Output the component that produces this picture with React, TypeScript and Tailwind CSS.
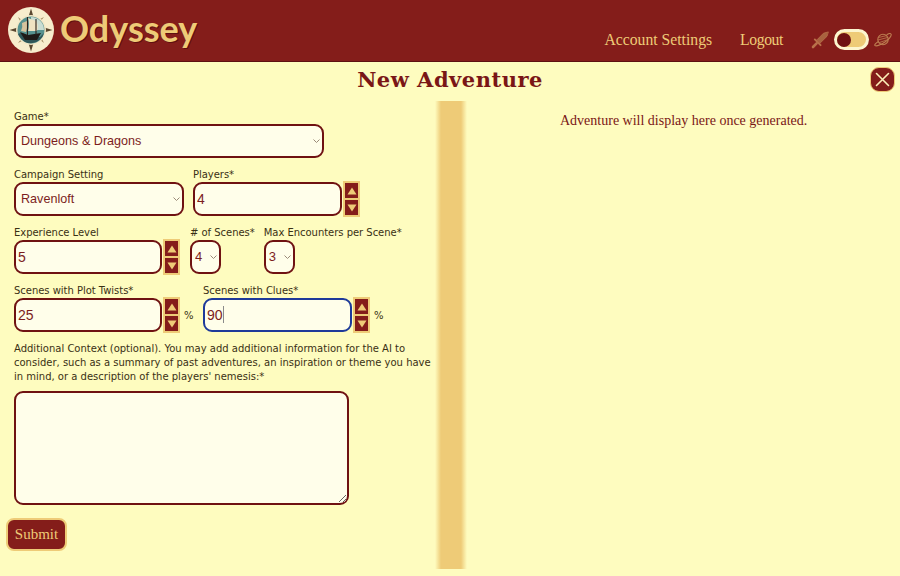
import React from "react";

const Label = ({ children }: { children: React.ReactNode }) => (
  <label className="block text-[10px] leading-[14px] tracking-[-0.03px] text-[#3a3014] font-['DejaVu_Sans',sans-serif] whitespace-nowrap">
    {children}
  </label>
);

const fieldCls =
  "block h-[34px] rounded-[9px] border-2 bg-[#fffeea] text-[#7c1d1d] font-['Liberation_Sans',sans-serif] outline-none";

const Spin = () => (
  <div className="flex flex-col ml-[1px] -my-[1px] w-[17px] h-[36px] bg-[#eecb77] p-[2px] gap-[2px]">
    {[0, 1].map((i) => (
      <button key={i} type="button" className="flex-1 bg-[#841c1a] flex items-center justify-center">
        <svg width="10" height="8" viewBox="0 0 10 8">
          <path d={i === 0 ? "M5 0.5 L9.5 7.5 H0.5 Z" : "M0.5 0.5 H9.5 L5 7.5 Z"} fill="#eecb77" />
        </svg>
      </button>
    ))}
  </div>
);

const NumberField = ({ value, wide = false, focused = false }: { value: string; wide?: boolean; focused?: boolean }) => (
  <div className="flex items-center">
    <div className="relative">
      <input
        readOnly
        value={value}
        className={`${fieldCls} text-[14px] px-[2px] ${wide ? "w-[149px]" : "w-[148px]"} ${focused ? "border-[#1e3a9a]" : "border-[#6f1212]"}`}
      />
      {focused && <span className="absolute left-[20px] top-[8px] w-px h-[17px] bg-[#8a8a8a]" />}
    </div>
    <Spin />
  </div>
);

const Select = ({ value, width, small = false }: { value: string; width: string; small?: boolean }) => (
  <div className={`relative ${width}`}>
    <select
      value={value}
      onChange={() => {}}
      className={`${fieldCls} border-[#6f1212] appearance-none w-full ${small ? "pl-[3px] text-[13px]" : "pl-[5px] text-[12.6px]"}`}
    >
      <option>{value}</option>
    </select>
    <svg width="7" height="5" viewBox="0 0 7 5" fill="none" stroke="#9a8a78" strokeWidth="1" className="absolute right-[4px] top-[15px]">
      <path d="M0.5 0.5 L3.5 3.5 L6.5 0.5" />
    </svg>
  </div>
);

const Logo = () => (
  <svg width="46" height="46" viewBox="0 0 46 46" className="shrink-0">
    <circle cx="23" cy="23" r="23" fill="#f7edcd" />
    <path d="M23 1.5 L28 18 L44.5 23 L28 28 L23 44.5 L18 28 L1.5 23 L18 18 Z" fill="#5a4830" />
    <path d="M10 10 L20 18 L36 10 L28 20 L36 36 L26 28 L10 36 L18 26 Z" fill="#a08a60" />
    <circle cx="23" cy="23" r="15" fill="#f2e7c6" />
    <circle cx="23" cy="23" r="13.5" fill="#57928f" />
    <path d="M23 10 A13 13 0 0 1 36 23 L24 23 Z" fill="#c9ddd2" />
    <path d="M10 27 Q15 24 20 30 L32 30 Q34 28 36 26 A13.5 13.5 0 0 1 11 29 Z" fill="#2f5557" />
    <path d="M20 11 L28 14 Q31 19 29 24 L20 24 Q22 17 20 11 Z" fill="#efe3c2" />
    <path d="M14 16 L19 14 Q20 20 18 25 L13 24 Q15 20 14 16 Z" fill="#d6c49d" />
    <path d="M12 25 L20 28 L33 26 L29 33 L17 33 Z" fill="#1f1a17" />
    <path d="M19.5 10 V28 M28 12 V28" stroke="#2a211b" strokeWidth="1.1" />
  </svg>
);

const Sword = () => (
  <svg width="18" height="18" viewBox="0 0 18 18" fill="none" strokeLinecap="round" strokeLinejoin="round">
    <path d="M17 1 L12.5 2.2 L6 8.8 L9.2 12 L15.8 5.5 Z" fill="#a8623f" stroke="#b9714a" strokeWidth="0.8" />
    <path d="M3.8 8.4 L9.6 14.2" stroke="#b9714a" strokeWidth="1.9" />
    <path d="M5.6 12.4 L2 16" stroke="#b9714a" strokeWidth="2.6" />
  </svg>
);

const Planet = () => (
  <svg width="18" height="15" viewBox="0 0 18 15" fill="none" stroke="#bd7d50" strokeWidth="1.1">
    <circle cx="9" cy="7.5" r="5.2" />
    <path d="M4.5 9.5 C1 11.5 0.3 13 1 13.6 C2.5 14.5 7 12.5 11 10 C15 7.5 18 3.5 17 2 C16.5 1 14.6 1.4 12.6 3" />
    <path d="M4.5 5.5 L12.5 3.6 M4 8 L13.5 5.5 M5.2 10.6 L14 7.5" strokeWidth="0.8" />
  </svg>
);

const display = "font-['DejaVu_Serif',serif]";
const serif = "font-['Liberation_Serif',serif]";

const Percent = () => (
  <span className="ml-[4px] w-[10px] text-[10px] text-[#3a3014] font-['DejaVu_Sans',sans-serif]">%</span>
);

export default function App() {
  return (
    <div className="w-[900px] h-[576px] overflow-hidden bg-[#fefcbf] flex flex-col">
      <header className="h-[62px] shrink-0 bg-[#841d1a] border-b border-[#5e1010] flex items-center justify-between pl-[8px] pr-[8px]">
        <div className="flex items-center gap-[6px] -mt-[1px]">
          <Logo />
          <span className="text-[#eecb77] text-[36px] leading-none font-bold font-['Lato',sans-serif] -mt-[5px] [text-shadow:1px_1px_0_#5e1010]">
            Odyssey
          </span>
        </div>
        <nav className="flex items-center mt-[18px]">
          <a className={`text-[#eecb77] text-[15.7px] leading-none ${serif}`}>Account Settings</a>
          <a className={`ml-[28px] text-[#eecb77] text-[15.7px] leading-none ${serif} tracking-[-0.4px]`}>Logout</a>
          <span className="ml-[28px] flex"><Sword /></span>
          <span className="ml-[5px] w-[35px] h-[21px] rounded-full bg-[#eecb77] border-[3px] border-[#fdf6cf] flex items-center">
            <span className="w-[14px] h-[14px] rounded-full bg-[#6f1212]" />
          </span>
          <span className="ml-[5px] flex"><Planet /></span>
        </nav>
      </header>

      <div className="relative flex-1 min-h-0 flex flex-col">
        <h1 className={`text-center text-[#7a1616] text-[21px] leading-none font-bold ${display} tracking-[0.5px] pt-[7px] h-[39px] shrink-0`}>
          New Adventure
        </h1>
        <button className="absolute right-[5px] top-[5px] w-[25px] h-[25px] rounded-[9px] bg-[#841d1a] border border-[#eecb77] flex items-center justify-center">
          <svg width="15" height="15" viewBox="0 0 15 15" stroke="#fdf0b8" strokeWidth="1.6" strokeLinecap="round">
            <path d="M1.5 1.5 L13.5 13.5 M13.5 1.5 L1.5 13.5" />
          </svg>
        </button>

        <div className="flex flex-1 min-h-0 pb-[7px]">
          <form className="w-[435px] shrink-0 pl-[14px] pt-[9px] flex flex-col">
            <Label>Game*</Label>
            <Select value="Dungeons & Dragons" width="w-[310px]" />

            <div className="flex gap-[9px] mt-[10px]">
              <div>
                <Label>Campaign Setting</Label>
                <Select value="Ravenloft" width="w-[170px]" />
              </div>
              <div>
                <Label>Players*</Label>
                <NumberField value="4" wide />
              </div>
            </div>

            <div className="flex mt-[10px]">
              <div>
                <Label>Experience Level</Label>
                <NumberField value="5" />
              </div>
              <div className="ml-[10px]">
                <Label>
                  # of Scenes*
                </Label>
                <Select value="4" width="w-[31px]" small />
              </div>
              <div className="ml-[9px]">
                <Label>Max Encounters per Scene*</Label>
                <Select value="3" width="w-[31px]" small />
              </div>
            </div>

            <div className="flex mt-[10px]">
              <div>
                <Label>Scenes with Plot Twists*</Label>
                <div className="flex items-center">
                  <NumberField value="25" />
                  <Percent />
                </div>
              </div>
              <div className="ml-[9px]">
                <Label>Scenes with Clues*</Label>
                <div className="flex items-center">
                  <NumberField value="90" wide focused />
                  <Percent />
                </div>
              </div>
            </div>

            <p className="w-[418px] mt-[10px] text-[10px] leading-[14px] text-[#3a3014] font-['DejaVu_Sans',sans-serif]">
              Additional Context (optional). You may add additional information for the AI to consider, such as a summary of past adventures, an inspiration or theme you have in mind, or a description of the players' nemesis:*
            </p>
            <textarea readOnly className="mt-[7px] block w-[335px] h-[114px] shrink-0 rounded-[9px] border-2 border-[#6f1212] bg-[#fffeea] outline-none" />
            <button
              type="button"
              className={`-ml-[8px] mt-[13px] w-[61px] h-[33px] rounded-[8px] bg-[#841d1a] border-2 border-[#eecb77] text-[#eecb77] text-[15px] ${serif}`}
            >
              Submit
            </button>
          </form>

          <div className="w-[32px] shrink-0 bg-[linear-gradient(90deg,transparent,#eecb77_6px,#eecb77_26px,transparent)]" />

          <div className="flex-1 pt-[12px] pl-[93px]">
            <p className={`text-[#7a1616] text-[14px] leading-[16px] ${serif} whitespace-nowrap`}>
              Adventure will display here once generated.
            </p>
          </div>
        </div>
      </div>
    </div>
  );
}
